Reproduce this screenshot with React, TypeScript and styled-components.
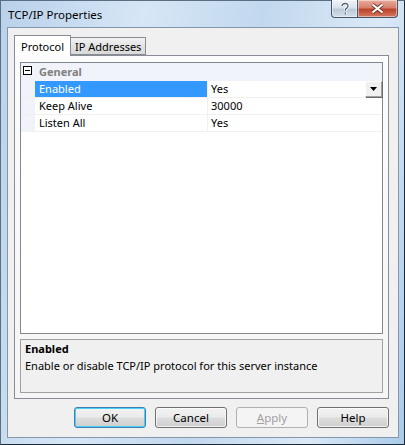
import React from 'react'
import styled, { createGlobalStyle } from 'styled-components'

const GlobalStyle = createGlobalStyle`
  html, body { margin: 0; padding: 0; background: #ffffff; }
  body { font-family: "Noto Sans", "DejaVu Sans", sans-serif; font-size: 11px; color: #000; }
`

const Window = styled.div`
  width: 405px;
  height: 445px;
  box-sizing: border-box;
  display: flex;
  flex-direction: column;
  border-left: 1px solid #5a6e84;
  border-top: 1px solid #5a6e84;
  border-right: 1px solid #1c2a38;
  border-bottom: 1px solid #1c2a38;
  background: linear-gradient(100deg, #b9d1ea 0%, #d6e6f6 30%, #c2d8ee 55%, #dbe9f7 80%, #a9cbe9 100%);
`

const TitleBar = styled.div`
  height: 26px;
  display: flex;
  align-items: flex-start;
  padding-left: 7px;
`

const Title = styled.span`
  font-size: 11.5px;
  line-height: 27px;
  color: #000;
`

const CaptionGroup = styled.div`
  margin-left: auto;
  margin-right: 6px;
  display: flex;
  margin-top: -1px;
`

const CaptionButton = styled.div<{ $close?: boolean }>`
  width: ${({ $close }) => ($close ? '40px' : '27px')};
  height: 18px;
  box-sizing: border-box;
  display: flex;
  align-items: center;
  justify-content: center;
  border: 1px solid #44566a;
  border-top: none;
  border-left: ${({ $close }) => ($close ? 'none' : '1px solid #44566a')};
  border-radius: ${({ $close }) => ($close ? '0 0 4px 0' : '0 0 0 4px')};
  background: ${({ $close }) =>
    $close
      ? 'linear-gradient(#e9ac9e 0%, #d7806c 45%, #bb442c 55%, #d57a62 100%)'
      : 'linear-gradient(#eef3f8 0%, #d9e2ec 45%, #bccad8 55%, #d3dfea 100%)'};
  box-shadow: inset 0 0 0 1px rgba(255, 255, 255, 0.45);
`

const Client = styled.div`
  flex: 1;
  margin: 0 5px 6px 6px;
  background: #f0f0f0;
  border: 1px solid #8396ab;
  display: flex;
  flex-direction: column;
  padding: 7px 9px 9px 6px;
`

const TabStrip = styled.div`
  display: flex;
  align-items: flex-end;
  height: 20px;
  position: relative;
  z-index: 1;
`

const Tab = styled.div<{ $active?: boolean }>`
  box-sizing: border-box;
  height: ${({ $active }) => ($active ? '21px' : '18px')};
  padding: ${({ $active }) => ($active ? '0 6px' : '0 4px')};
  margin-bottom: ${({ $active }) => ($active ? '-1px' : '0')};
  border: 1px solid #898c95;
  border-bottom: ${({ $active }) => ($active ? 'none' : '1px solid #898c95')};
  border-left: ${({ $active }) => ($active ? '1px solid #898c95' : 'none')};
  background: ${({ $active }) => ($active ? '#ffffff' : 'linear-gradient(#f2f2f2, #e3e3e3 50%, #d9d9d9)')};
  display: flex;
  align-items: center;
  font-size: 11px;
  color: #000;
  line-height: 1;
`

const TabPanel = styled.div`
  height: 344px;
  box-sizing: border-box;
  border: 1px solid #898c95;
  background: linear-gradient(#fcfcfc, #f5f5f5);
  padding: 6px 5px 5px 5px;
  display: flex;
  flex-direction: column;
  gap: 5px;
`

const Grid = styled.div`
  height: 272px;
  box-sizing: border-box;
  border: 1px solid #828790;
  background: #ffffff;
  display: flex;
  flex-direction: column;
`

const Row = styled.div<{ $category?: boolean }>`
  display: flex;
  height: ${({ $category }) => ($category ? '18px' : '17px')};
  box-sizing: border-box;
  border-bottom: 1px solid ${({ $category }) => ($category ? '#f0f4fa' : '#f0f0f0')};
  background: ${({ $category }) => ($category ? '#f0f4fa' : '#ffffff')};
`

const Gutter = styled.div`
  width: 14px;
  flex: none;
  background: #f0f4fa;
  display: flex;
  align-items: flex-start;
`

const Expander = styled.div`
  width: 9px;
  height: 9px;
  box-sizing: border-box;
  border: 1px solid #000;
  background: #fff;
  display: flex;
  align-items: center;
  justify-content: center;
  margin-left: 2px;
  margin-top: 3px;
  &::after {
    content: '';
    width: 5px;
    height: 1px;
    background: #000;
  }
`

const CategoryLabel = styled.div`
  flex: 1;
  padding-left: 4px;
  font-weight: bold;
  color: #808080;
  line-height: 18px;
`

const NameCell = styled.div<{ $selected?: boolean }>`
  width: 173px;
  flex: none;
  box-sizing: border-box;
  padding-left: 4px;
  line-height: 16px;
  background: ${({ $selected }) => ($selected ? '#3399ff' : '#ffffff')};
  color: ${({ $selected }) => ($selected ? '#ffffff' : '#000000')};
  border-right: 1px solid #f0f0f0;
`

const ValueCell = styled.div`
  flex: 1;
  display: flex;
  align-items: flex-start;
  padding-left: 3px;
  line-height: 16px;
`

const DropButton = styled.div`
  margin-left: auto;
  width: 17px;
  height: 16px;
  box-sizing: border-box;
  border: 1px solid #a0a0a0;
  border-top-color: #ffffff;
  border-left-color: #ffffff;
  box-shadow: 1px 1px 0 #696969;
  background: #f0f0f0;
  display: flex;
  align-items: center;
  justify-content: center;
`

const Description = styled.div`
  flex: 1;
  border: 1px solid #a0a0a0;
  background: #f0f0f0;
  padding: 1px 4px;
  display: flex;
  flex-direction: column;
`

const DescTitle = styled.div`
  font-weight: bold;
  line-height: 16px;
`

const DescText = styled.div`
  line-height: 17px;
`

const ButtonRow = styled.div`
  display: flex;
  justify-content: flex-end;
  gap: 9px;
  margin-top: auto;
  padding-right: 0;
`

const Button = styled.button<{ $default?: boolean }>`
  width: 72px;
  height: 21px;
  box-sizing: border-box;
  font-family: inherit;
  font-size: 11.5px;
  padding: 0;
  border-radius: 3px;
  border: 1px solid ${({ $default }) => ($default ? '#3c7fb1' : '#707070')};
  background: linear-gradient(#f2f2f2 0%, #ebebeb 48%, #dddddd 52%, #cfcfcf 100%);
  box-shadow: inset 0 0 0 1px ${({ $default }) => ($default ? '#48d0f6' : 'rgba(255,255,255,0.7)')};
  color: #000;
  &:disabled {
    border-color: #adb2b5;
    background: #f4f4f4;
    box-shadow: none;
    color: #a0a0a0;
  }
  u { text-decoration: underline; }
`

const rows = [
  { name: 'Enabled', value: 'Yes', selected: true },
  { name: 'Keep Alive', value: '30000' },
  { name: 'Listen All', value: 'Yes' },
]

export default function App() {
  return (
    <>
      <GlobalStyle />
      <Window>
        <TitleBar>
          <Title>TCP/IP Properties</Title>
          <CaptionGroup>
            <CaptionButton>
              <svg width="10" height="14" viewBox="0 0 10 14">
                <path d="M2 4 Q2 1.5 5 1.5 Q8 1.5 8 4 Q8 5.8 5.8 6.8 L5.3 8.5 M5.3 10.5 L5.3 12.5" fill="none" stroke="#ffffff" strokeWidth="3" />
                <path d="M2 4 Q2 1.5 5 1.5 Q8 1.5 8 4 Q8 5.8 5.8 6.8 L5.3 8.5 M5.3 10.5 L5.3 12.5" fill="none" stroke="#56606c" strokeWidth="1.3" />
              </svg>
            </CaptionButton>
            <CaptionButton $close>
              <svg width="15" height="11" viewBox="0 0 15 11">
                <path d="M2.5 1.5 L12.5 9.5 M12.5 1.5 L2.5 9.5" stroke="#6a2a20" strokeWidth="3.6" />
                <path d="M2.5 1.5 L12.5 9.5 M12.5 1.5 L2.5 9.5" stroke="#ffffff" strokeWidth="2.2" />
              </svg>
            </CaptionButton>
          </CaptionGroup>
        </TitleBar>
        <Client>
          <TabStrip>
            <Tab $active>Protocol</Tab>
            <Tab>IP Addresses</Tab>
          </TabStrip>
          <TabPanel>
            <Grid>
              <Row $category>
                <Gutter>
                  <Expander />
                </Gutter>
                <CategoryLabel>General</CategoryLabel>
              </Row>
              {rows.map((r) => (
                <Row key={r.name}>
                  <Gutter />
                  <NameCell $selected={r.selected}>{r.name}</NameCell>
                  <ValueCell>
                    {r.value}
                    {r.selected && (
                      <DropButton>
                        <svg width="7" height="4" viewBox="0 0 7 4">
                          <path d="M0 0 H7 L3.5 4 Z" fill="#000" />
                        </svg>
                      </DropButton>
                    )}
                  </ValueCell>
                </Row>
              ))}
            </Grid>
            <Description>
              <DescTitle>Enabled</DescTitle>
              <DescText>Enable or disable TCP/IP protocol for this server instance</DescText>
            </Description>
          </TabPanel>
          <ButtonRow>
            <Button $default>OK</Button>
            <Button>Cancel</Button>
            <Button disabled>
              <u>A</u>pply
            </Button>
            <Button>Help</Button>
          </ButtonRow>
        </Client>
      </Window>
    </>
  )
}
